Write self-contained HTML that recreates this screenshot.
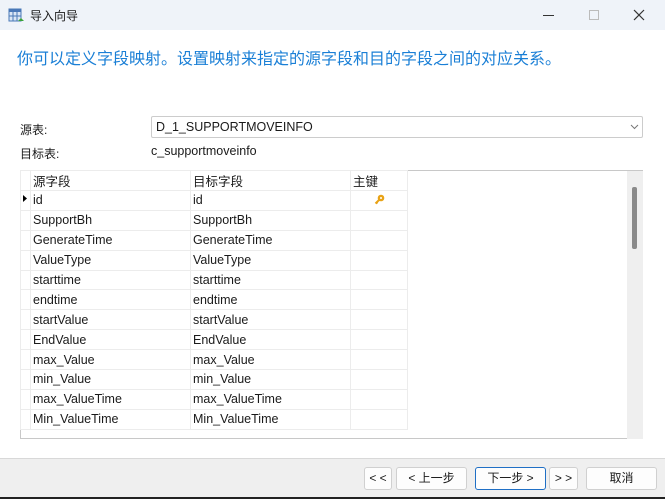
<!DOCTYPE html>
<html><head><meta charset="utf-8"><style>
*{margin:0;padding:0;box-sizing:border-box}
body{width:665px;height:499px;overflow:hidden;background:#fff;font-family:"Liberation Sans","Noto Sans CJK SC",sans-serif;font-size:12px;color:#1a1a1a;position:relative}
.a{position:absolute}
.title{left:0;top:0;width:665px;height:30px;background:#eff3f9}
table{border-collapse:collapse;position:absolute;left:20px;top:170px;table-layout:fixed}
td{height:19.9px;border:1px solid #ececec;padding:0 0 0 2px;font-size:12.5px;white-space:nowrap;vertical-align:middle;overflow:hidden}
td.rh{padding:0}
.btn{position:absolute;top:467px;height:23px;background:#fdfdfd;border:1px solid #d0d0d0;border-radius:3px;text-align:center;line-height:21px;font-size:12px}
</style></head><body>
<div class="a title"></div>
<svg class="a" style="left:8px;top:8px" width="16" height="16" viewBox="0 0 16 16"><rect x="1" y="1" width="12" height="12" fill="#dbe6f5" stroke="#4a78b8"/><rect x="1" y="1" width="12" height="3" fill="#4a78b8"/><path d="M5 4v9M9 4v9M1 8h12" stroke="#4a78b8"/><path d="M10 13l3-3 3 3z" fill="#3aa23a"/></svg>
<div class="a" style="left:30px;top:7px;font-size:12px">导入向导</div>
<div class="a" style="left:543px;top:15px;width:11px;height:1px;background:#333"></div>
<div class="a" style="left:589px;top:10px;width:10px;height:10px;border:1px solid #bbb"></div>
<svg class="a" style="left:633px;top:9px" width="12" height="12"><path d="M1 1L11 11M11 1L1 11" stroke="#333" stroke-width="1.2"/></svg>
<div class="a" style="left:17px;top:45px;font-size:16px;color:#1a7fd6">你可以定义字段映射。设置映射来指定的源字段和目的字段之间的对应关系。</div>
<div class="a" style="left:20px;top:121px">源表:</div>
<div class="a" style="left:151px;top:116px;width:492px;height:22px;border:1px solid #ccc;border-radius:2px;padding:3px 0 0 4px;font-size:12.5px">D_1_SUPPORTMOVEINFO</div>
<svg class="a" style="left:630px;top:124px" width="9" height="6"><path d="M1 1l3.5 3.5L8 1" stroke="#777" fill="none"/></svg>
<div class="a" style="left:20px;top:145px">目标表:</div>
<div class="a" style="left:151px;top:144px;font-size:12.5px">c_supportmoveinfo</div>
<div class="a" style="left:20px;top:170px;width:623px;height:269px;border:1px solid #c8c8c8;background:#fff"></div>
<div class="a" style="left:627px;top:171px;width:16px;height:268px;background:#efefef"></div>
<div class="a" style="left:632px;top:187px;width:5px;height:62px;background:#8a8a8a;border-radius:2px"></div>
<table style="width:387px">
<colgroup><col style="width:10px"><col style="width:160px"><col style="width:160px"><col style="width:57px"></colgroup>
<tr><td class="rh"></td><td>源字段</td><td>目标字段</td><td>主键</td></tr>
<tr><td class="rh"><svg width="10" height="11"><path d="M2 2l4 3.5L2 9z" fill="#000"/></svg></td><td>id</td><td>id</td><td><svg width="56" height="14"><circle cx="28" cy="6" r="3.3" fill="#e8a317"/><circle cx="28" cy="6" r="1" fill="#fff"/><path d="M26 8l-3.5 3.5M23.5 10.5l1 1" stroke="#e8a317" stroke-width="2"/></svg></td></tr>
<tr><td class="rh"></td><td>SupportBh</td><td>SupportBh</td><td></td></tr>
<tr><td class="rh"></td><td>GenerateTime</td><td>GenerateTime</td><td></td></tr>
<tr><td class="rh"></td><td>ValueType</td><td>ValueType</td><td></td></tr>
<tr><td class="rh"></td><td>starttime</td><td>starttime</td><td></td></tr>
<tr><td class="rh"></td><td>endtime</td><td>endtime</td><td></td></tr>
<tr><td class="rh"></td><td>startValue</td><td>startValue</td><td></td></tr>
<tr><td class="rh"></td><td>EndValue</td><td>EndValue</td><td></td></tr>
<tr><td class="rh"></td><td>max_Value</td><td>max_Value</td><td></td></tr>
<tr><td class="rh"></td><td>min_Value</td><td>min_Value</td><td></td></tr>
<tr><td class="rh"></td><td>max_ValueTime</td><td>max_ValueTime</td><td></td></tr>
<tr><td class="rh"></td><td>Min_ValueTime</td><td>Min_ValueTime</td><td></td></tr>
</table>
<div class="a" style="left:0;top:458px;width:665px;height:41px;background:#efefef;border-top:1px solid #d8d8d8"></div>
<div class="a" style="left:0;top:497px;width:665px;height:2px;background:#222"></div>
<div class="btn" style="left:364px;width:28px">&lt; &lt;</div>
<div class="btn" style="left:396px;width:71px">&lt; 上一步</div>
<div class="btn" style="left:475px;width:71px;border-color:#1f6fc5">下一步 &gt;</div>
<div class="btn" style="left:549px;width:29px">&gt; &gt;</div>
<div class="btn" style="left:586px;width:71px">取消</div>
</body></html>
